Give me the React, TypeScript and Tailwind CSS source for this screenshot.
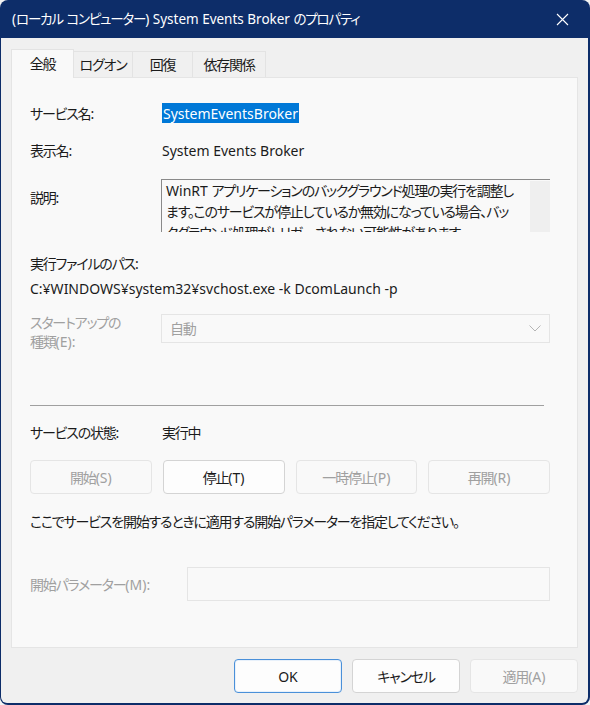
import React from "react";

const font = "font-['Noto_Sans','Noto_Sans_CJK_JP',sans-serif] [font-feature-settings:'palt']";

function T({ s }: { s: string }) {
  const parts = s.split(/([\u3000-\u30ff\u4e00-\u9fff\uff01-\uff60]+)/);
  return (
    <>
      {parts.map((p, i) =>
        /[\u3000-\u30ff\u4e00-\u9fff\uff01-\uff60]/.test(p) ? (
          <span key={i} className="tracking-[-1.2px]">{p}</span>
        ) : (
          <React.Fragment key={i}>{p}</React.Fragment>
        )
      )}
    </>
  );
}

function Btn({ label, disabled, primary, className = "" }: { label: string; disabled?: boolean; primary?: boolean; className?: string }) {
  const base = "h-[34px] flex items-center justify-center rounded-[4px] text-[14px] border ";
  const style = disabled
    ? "bg-[#f9f9f9] border-[#e5e5e5] text-[#a0a0a0]"
    : primary
    ? "bg-[#fdfdfd] border-[#4a90d9] text-[#1b1b1b] shadow-[inset_0_0_0_1px_#e8f1fb]"
    : "bg-[#fdfdfd] border-[#d4d4d4] text-[#1b1b1b]";
  return (
    <div className={base + style + " " + className}>
      <T s={label} />
    </div>
  );
}

export default function App() {
  return (
    <div className={`w-[590px] h-[705px] bg-[#f3f3f3] ${font}`}>
      <div className="w-[590px] h-[705px] rounded-[8px] overflow-hidden bg-[#0d2d69] flex flex-col pl-[1px] pr-[2px] pb-[2px]">
        {/* title bar */}
        <div className="h-[38px] shrink-0 flex items-center justify-between pl-[11px] pr-[16px] text-white text-[13.5px]">
          <span className="pt-[1px]"><T s="(ローカル コンピューター) System Events Broker のプロパティ" /></span>
          <svg width="13" height="13" viewBox="0 0 13 13" className="mr-[3px]">
            <path d="M1 1 L12 12 M12 1 L1 12" stroke="white" strokeWidth="1.1" />
          </svg>
        </div>
        {/* body */}
        <div className="flex-1 bg-[#f0f0f0] rounded-b-[6px] flex flex-col px-[10px] pt-[11px] pb-[10px]">
          {/* tabs */}
          <div className="h-[28px] flex items-end text-[14px] text-[#1b1b1b]">
            <div className="h-[29px] w-[63px] bg-[#f9f9f9] border border-b-0 border-[#e3e3e3] flex items-center justify-center relative z-10 -mb-[1px] pb-[2px]"><T s="全般" /></div>
            <div className="h-[26px] w-[59px] bg-[#f0f0f0] border border-b-0 border-l-0 border-[#e3e3e3] flex items-center justify-center"><T s="ログオン" /></div>
            <div className="h-[26px] w-[60px] bg-[#f0f0f0] border border-b-0 border-l-0 border-[#e3e3e3] flex items-center justify-center"><T s="回復" /></div>
            <div className="h-[26px] w-[73px] bg-[#f0f0f0] border border-b-0 border-l-0 border-[#e3e3e3] flex items-center justify-center"><T s="依存関係" /></div>
          </div>
          {/* panel */}
          <div className="h-[571px] bg-[#f9f9f9] border border-[#e5e5e5] pl-[18px] flex flex-col text-[14px] text-[#1b1b1b]">
            <div className="mt-[25px] h-[20px] flex items-center">
              <div className="w-[132px]"><T s="サービス名:" /></div>
              <div className="bg-[#0078d7] text-white h-[20px] flex items-center px-[1px]">SystemEventsBroker</div>
            </div>
            <div className="mt-[17px] h-[20px] flex items-center">
              <div className="w-[132px]"><T s="表示名:" /></div>
              <div>System Events Broker</div>
            </div>
            <div className="mt-[19px] flex">
              <div className="w-[131px] pt-[8px]"><T s="説明:" /></div>
              <div className="w-[389px] h-[53px] border-l border-t border-[#8a8a8a] bg-[#f9f9f9] flex overflow-hidden">
                <div className="flex-1 pl-[4px] pt-[0px] leading-[21px] whitespace-nowrap overflow-hidden">
                  <T s="WinRT アプリケーションのバックグラウンド処理の実行を調整し" /><br />
                  <T s="ます。このサービスが停止しているか無効になっている場合、バッ" /><br />
                  <T s="クグラウンド処理がトリガーされない可能性があります。" />
                </div>
                <div className="w-[20px] bg-[#efefef] mt-[1px]" />
              </div>
            </div>
            <div className="mt-[21px] h-[20px] flex items-center"><T s="実行ファイルのパス:" /></div>
            <div className="mt-[5px] h-[20px] flex items-center">C:¥WINDOWS¥system32¥svchost.exe -k DcomLaunch -p</div>
            <div className="mt-[16px] flex">
              <div className="w-[131px] text-[#a0a0a0] leading-[19px] -mt-[1px]"><T s="スタートアップの" /><br /><T s="種類(E):" /></div>
              <div className="w-[389px] h-[29px] border border-[#e5e5e5] bg-[#f9f9f9] flex items-center justify-between pl-[8px] pr-[8px] text-[#a0a0a0]">
                <span><T s="自動" /></span>
                <svg width="12" height="7" viewBox="0 0 12 7">
                  <path d="M0.5 0.5 L6 6 L11.5 0.5" fill="none" stroke="#b5b5b5" strokeWidth="1" />
                </svg>
              </div>
            </div>
            <div className="mt-[54px] w-[514px] h-[1px] bg-[#a0a0a0]" />
            <div className="mt-[16px] h-[20px] flex items-center">
              <div className="w-[132px]"><T s="サービスの状態:" /></div>
              <div><T s="実行中" /></div>
            </div>
            <div className="mt-[18px] grid grid-cols-4 gap-[11px] w-[520px]">
              <Btn label="開始(S)" disabled />
              <Btn label="停止(T)" />
              <Btn label="一時停止(P)" disabled />
              <Btn label="再開(R)" disabled />
            </div>
            <div className="mt-[17px] h-[20px] flex items-center"><T s="ここでサービスを開始するときに適用する開始パラメーターを指定してください。" /></div>
            <div className="mt-[36px] flex items-center">
              <div className="w-[157px] text-[#a0a0a0]"><T s="開始パラメーター(M):" /></div>
              <div className="w-[363px] h-[34px] border border-[#e5e5e5] bg-[#f9f9f9]" />
            </div>
          </div>
          {/* bottom buttons */}
          <div className="mt-[11px] flex justify-end gap-[10px]">
            <Btn label="OK" primary className="w-[108px]" />
            <Btn label="キャンセル" className="w-[108px]" />
            <Btn label="適用(A)" disabled className="w-[108px]" />
          </div>
        </div>
      </div>
    </div>
  );
}
